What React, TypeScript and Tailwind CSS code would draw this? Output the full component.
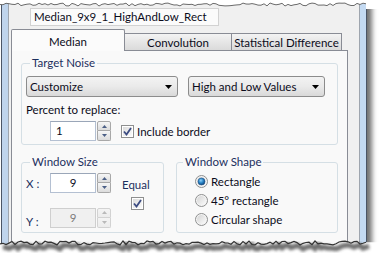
import React from "react";

function jagged(x0: number, x1: number, yBase: number, amp: number, seed: number, step = 3) {
  let s = seed;
  const rnd = () => {
    s = (s * 9301 + 49297) % 233280;
    return s / 233280;
  };
  const pts: [number, number][] = [];
  for (let x = x0; x <= x1; x += step) {
    pts.push([x, yBase + (rnd() - 0.5) * amp]);
  }
  return pts;
}

const ptsStr = (p: [number, number][]) => p.map(([x, y]) => `${x},${y.toFixed(1)}`).join(" ");

function TopTear() {
  const p = jagged(0, 366, 4.5, 3, 7);
  const white = `0,0 383,0 383,9 366,9 ${ptsStr(p.slice().reverse())}`;
  return (
    <svg className="absolute left-0 top-0" width={383} height={14}>
      <polygon points={white} fill="#ffffff" />
      <polyline points={ptsStr(p)} fill="none" stroke="#6a6a6a" strokeWidth={1} />
    </svg>
  );
}

function BottomTear() {
  const p = jagged(0, 366, 11, 4, 13);
  const whitePoly = `${ptsStr(p)} 383,${p[p.length - 1][1]} 383,30 0,30`;
  const sh = p.map(([x, y]) => [x + 3, y + 4] as [number, number]);
  return (
    <svg className="absolute left-0 top-[232px]" width={383} height={29}>
      <defs>
        <filter id="blur" x="-10%" y="-100%" width="120%" height="300%">
          <feGaussianBlur stdDeviation="1.6" />
        </filter>
      </defs>
      <polygon points={whitePoly} fill="#ffffff" />
      <polyline points={ptsStr(sh)} fill="none" stroke="#555" strokeWidth={5} filter="url(#blur)" opacity={0.85} />
      <polyline points={ptsStr(p)} fill="none" stroke="#333" strokeWidth={1.2} />
    </svg>
  );
}

function Arrow() {
  return (
    <svg width="7" height="4" viewBox="0 0 7 4">
      <polygon points="0,0 7,0 3.5,4" fill="#000" />
    </svg>
  );
}

function Combo({ text, w }: { text: string; w: string }) {
  return (
    <div
      className={`${w} h-[21px] flex items-center justify-between pl-[3px] pr-[5px] rounded-[3px] border border-[#8c8c8c] bg-gradient-to-b from-[#f3f3f3] via-[#eaeaea] to-[#d9d9d9]`}
    >
      <span className="leading-[15px]">{text}</span>
      <Arrow />
    </div>
  );
}

function Spinner({ disabled }: { disabled?: boolean }) {
  const c = disabled ? "#b9b9b9" : "#4b5f86";
  const b = disabled ? "border-[#d2d2d2]" : "border-[#a8a8a8]";
  const bg = disabled ? "from-[#f4f4f4] to-[#ececec]" : "from-[#f6f6f6] to-[#dcdcdc]";
  return (
    <div className="ml-[1px] w-[14px] h-[20px] flex flex-col">
      <div className={`h-[10px] border ${b} bg-gradient-to-b ${bg} flex items-center justify-center rounded-t-[2px]`}>
        <svg width="5" height="3" viewBox="0 0 5 3">
          <polygon points="0,3 5,3 2.5,0" fill={c} />
        </svg>
      </div>
      <div className={`h-[10px] border border-t-0 ${b} bg-gradient-to-b ${bg} flex items-center justify-center rounded-b-[2px]`}>
        <svg width="5" height="3" viewBox="0 0 5 3">
          <polygon points="0,0 5,0 2.5,3" fill={c} />
        </svg>
      </div>
    </div>
  );
}

function Check() {
  return (
    <div className="w-[13px] h-[13px] border border-[#8e8f8f] bg-white p-[1px]">
      <div className="w-full h-full bg-gradient-to-br from-[#dcdcdc] to-[#fbfbfb] flex items-center justify-center">
        <svg width="9" height="9" viewBox="0 0 9 9">
          <path d="M1 4.5 L3.5 7.5 L8 1" fill="none" stroke="#3c4c82" strokeWidth={1.8} />
        </svg>
      </div>
    </div>
  );
}

function Radio({ on }: { on?: boolean }) {
  return (
    <svg width="13" height="13" viewBox="0 0 13 13">
      <defs>
        <linearGradient id="rg" x1="0" y1="0" x2="1" y2="1">
          <stop offset="0" stopColor="#d4d4d4" />
          <stop offset="1" stopColor="#fbfbfb" />
        </linearGradient>
        <radialGradient id="dot" cx="0.4" cy="0.35" r="0.7">
          <stop offset="0" stopColor="#8fd0f7" />
          <stop offset="0.5" stopColor="#2a86c8" />
          <stop offset="1" stopColor="#0d3f73" />
        </radialGradient>
      </defs>
      <circle cx="6.5" cy="6.5" r="6" fill="#f4f4f4" stroke="#8e8f8f" strokeWidth={1} />
      <circle cx="6.5" cy="6.5" r="4.5" fill="url(#rg)" />
      {on && <circle cx="6.5" cy="6.5" r="3.5" fill="url(#dot)" stroke="#1d4f85" strokeWidth={0.6} />}
    </svg>
  );
}

export default function App() {
  return (
    <div className="relative w-[383px] h-[261px] overflow-hidden bg-white font-[Lato,'Noto_Sans',sans-serif] text-[11.5px] text-[#0b0b1a] whitespace-nowrap">
      <div className="ml-[1px] w-[366px] h-[246px] flex shadow-[5px_3px_5px_rgba(0,0,0,0.55)]">
        <div className="w-[1px] bg-[#4b5566]" />
        <div className="w-[6px] bg-[#bfd4ec]" />
        <div className="w-[1px] bg-[#9ea5ae]" />
        <div className="flex-1 bg-[#f0f0f0] flex flex-col">
          <div className="pt-[8px] pl-[21px]">
            <div className="w-[189px] h-[18px] border border-[#d2d2d2] bg-[#fbfbfb] pl-[3px] leading-[16px]">
              Median_9x9_1_HighAndLow_Rect
            </div>
          </div>
          <div className="mt-[3px] ml-[2px] h-[21px] flex items-end relative z-10">
            <div className="w-[114px] h-[22px] -mb-[1px] border border-b-0 border-[#898c95] bg-[#fbfbfb] rounded-t-[2px] flex justify-center pt-[4px] leading-[15px]">
              Median
            </div>
            <div className="w-[107px] h-[17px] border-t border-r border-[#898c95] bg-gradient-to-b from-[#f3f3f3] to-[#dadada] flex justify-center pt-[1px] leading-[15px]">
              Convolution
            </div>
            <div className="w-[110px] h-[17px] border-t border-r border-[#898c95] bg-gradient-to-b from-[#f3f3f3] to-[#dadada] flex justify-center pt-[1px] leading-[15px]">
              Statistical Difference
            </div>
          </div>
          <div className="ml-[2px] w-[337px] flex-1 border border-[#898c95] bg-[#f9f9f9] pl-[9px]">
            <fieldset className="mt-[5px] w-[317px] border border-[#d5dfe5] rounded-[3px] pl-[4px] pb-[3px]">
              <legend className="ml-[4px] px-[2px] leading-[14px] text-[#1c2f5e]">Target Noise</legend>
              <div className="mt-[6px] flex gap-[10px]">
                <Combo text="Customize" w="w-[152px]" />
                <Combo text="High and Low Values" w="w-[137px]" />
              </div>
              <div className="mt-[5px] leading-[15px]">Percent to replace:</div>
              <div className="mt-[4px] ml-[24px] flex items-center">
                <div className="w-[46px] h-[20px] border border-[#b4c0d2] border-t-[#9aa6b8] bg-white pl-[5px] leading-[18px]">1</div>
                <Spinner />
                <div className="ml-[10px]">
                  <Check />
                </div>
                <span className="ml-[3px] leading-[15px]">Include border</span>
              </div>
            </fieldset>
            <div className="mt-[10px] flex gap-[12px]">
              <fieldset className="w-[143px] border border-[#d5dfe5] rounded-[3px] pl-[4px] pb-[3px]">
                <legend className="ml-[4px] px-[2px] leading-[14px] text-[#1c2f5e]">Window Size</legend>
                <div className="flex">
                  <div className="mt-[4px] flex flex-col">
                    <div className="flex items-center">
                      <span className="w-[24px] leading-[15px] text-[#1c2f5e]">X :</span>
                      <div className="w-[46px] h-[20px] border border-[#b4c0d2] border-t-[#9aa6b8] bg-white text-center leading-[18px]">9</div>
                      <Spinner />
                    </div>
                    <div className="mt-[13px] flex items-center">
                      <span className="w-[24px] leading-[15px] mt-[8px] text-[#1c2f5e]">Y :</span>
                      <div className="w-[46px] h-[20px] border border-[#cfcfcf] bg-[#f0f0f0] text-center leading-[18px] text-[#7a7a7a]">9</div>
                      <Spinner disabled />
                    </div>
                  </div>
                  <div className="ml-[11px] mt-[8px] flex flex-col items-center">
                    <span className="leading-[15px] text-[#1c2f5e]">Equal</span>
                    <div className="mt-[5px] ml-[4px]">
                      <Check />
                    </div>
                  </div>
                </div>
              </fieldset>
              <fieldset className="w-[162px] border border-[#d5dfe5] rounded-[3px] pl-[18px] pb-[1px]">
                <legend className="-ml-[12px] px-[2px] leading-[14px] text-[#1c2f5e]">Window Shape</legend>
                <div className="mt-[3px] flex flex-col">
                  {[
                    ["Rectangle", true],
                    ["45° rectangle", false],
                    ["Circular shape", false],
                  ].map(([t, on]) => (
                    <div key={t as string} className="h-[19px] flex items-center gap-[3px]">
                      <Radio on={on as boolean} />
                      <span className="leading-[15px]">{t as string}</span>
                    </div>
                  ))}
                </div>
              </fieldset>
            </div>
          </div>
        </div>
        <div className="w-[1px] bg-[#9ea5ae]" />
        <div className="w-[6px] bg-[#c4daf2]" />
        <div className="w-[1px] bg-[#4b5566]" />
      </div>
      <TopTear />
      <BottomTear />
    </div>
  );
}
